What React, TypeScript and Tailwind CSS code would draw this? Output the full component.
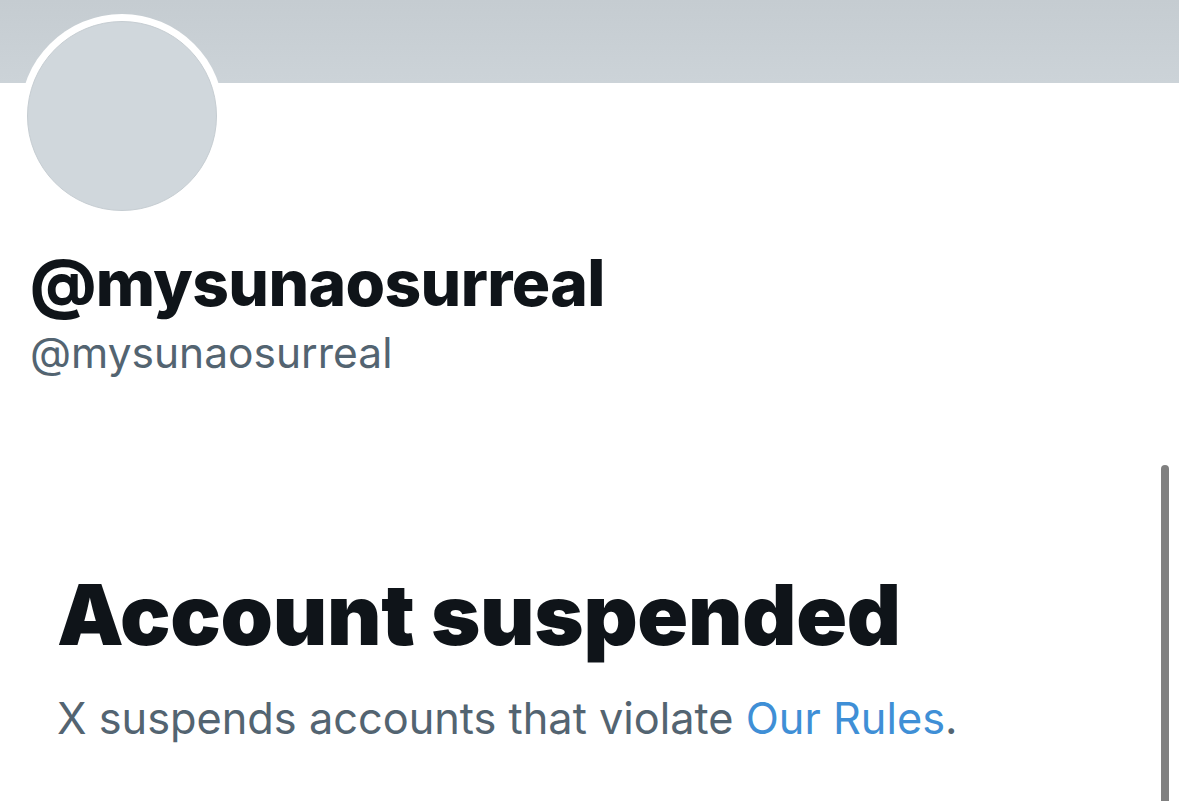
import React from 'react';

export default function App() {
  return (
    <div
      className="relative w-[1179px] h-[801px] overflow-hidden bg-white"
      style={{ fontFamily: 'Inter, "Noto Sans", sans-serif' }}
    >
      <div className="h-[83px] bg-gradient-to-b from-[#c5ccd1] to-[#ccd3d8]" />

      <div className="px-[30px]">
        <div className="-mt-[69px] -ml-[10px] w-[204px] h-[204px] rounded-full bg-white p-[7px]">
          <div className="w-full h-full rounded-full bg-[#d0d7dc] border border-[#c6cdd2]" />
        </div>

        <h1 className="mt-[30px] text-[64px] leading-[70px] font-extrabold tracking-[-0.6px] text-[#0f1419]">
          @mysunaosurreal
        </h1>
        <p className="mt-[10px] text-[42.5px] leading-[50px] text-[#536471]">@mysunaosurreal</p>

        <div className="mt-[192px] pl-[27px]">
          <h2 className="text-[84px] leading-[90px] font-black tracking-[-0.3px] text-[#0f1419]">
            Account suspended
          </h2>
          <p className="mt-[33px] text-[43.3px] leading-[50px] text-[#536471]">
            X suspends accounts that violate <span className="text-[#3f8fd6]">Our Rules</span>.
          </p>
        </div>
      </div>

      <div className="absolute right-[10px] top-[465px] w-[8px] h-[340px] rounded-full bg-[#808080]" />
    </div>
  );
}
